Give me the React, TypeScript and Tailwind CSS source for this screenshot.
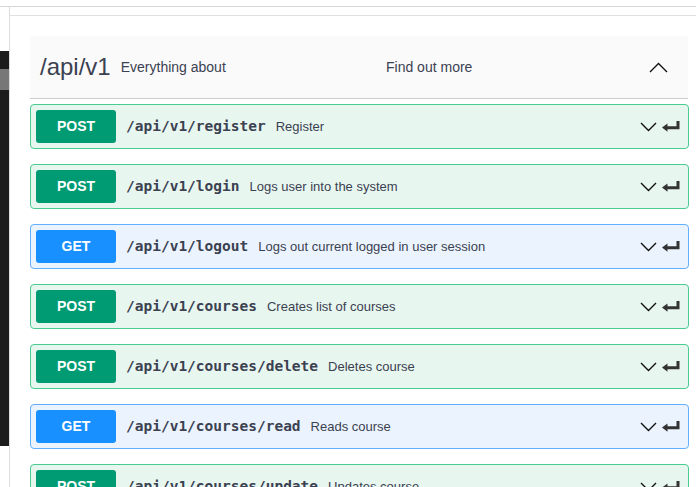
import React from "react";

type Op = { method: "POST" | "GET"; path: string; summary: string };

const OPS: Op[] = [
  { method: "POST", path: "/api/v1/register", summary: "Register" },
  { method: "POST", path: "/api/v1/login", summary: "Logs user into the system" },
  { method: "GET", path: "/api/v1/logout", summary: "Logs out current logged in user session" },
  { method: "POST", path: "/api/v1/courses", summary: "Creates list of courses" },
  { method: "POST", path: "/api/v1/courses/delete", summary: "Deletes course" },
  { method: "GET", path: "/api/v1/courses/read", summary: "Reads course" },
  { method: "POST", path: "/api/v1/courses/update", summary: "Updates course" },
];

const sans = { fontFamily: '"Liberation Sans", Arial, sans-serif' };

function ChevronDown() {
  return (
    <svg width="17" height="10" viewBox="0 0 17 10" fill="none">
      <path d="M1 1 L8.5 8.5 L16 1" stroke="#111" strokeWidth="1.4" />
    </svg>
  );
}

function ReturnArrow() {
  return (
    <svg width="18" height="11" viewBox="0 0 18 11" fill="#333">
      <path d="M14.5 0 H17.5 V8.2 H5.5 V10.8 L0 6.6 L5.5 2.4 V5.2 H14.5 Z" />
    </svg>
  );
}

function OpBlock({ op }: { op: Op }) {
  const post = op.method === "POST";
  return (
    <div
      className={`flex items-center h-[45px] mb-[15px] rounded-[4px] border px-[5px] shrink-0 ${
        post ? "border-[#49cc90] bg-[#e8f6f0]" : "border-[#61affe] bg-[#ebf4fe]"
      }`}
    >
      <div
        className={`w-[80px] h-[33px] rounded-[3px] flex items-center justify-center text-white font-bold text-[14px] ${
          post ? "bg-[#009b73]" : "bg-[#1890ff]"
        }`}
        style={sans}
      >
        {op.method}
      </div>
      <span
        className="ml-[10px] font-bold text-[14.5px] text-[#3b4151] whitespace-nowrap"
        style={{ fontFamily: '"DejaVu Sans Mono", "Liberation Mono", monospace' }}
      >
        {op.path}
      </span>
      <span className="ml-[10px] text-[13px] text-[#3b4151] whitespace-nowrap" style={sans}>
        {op.summary}
      </span>
      <div className="ml-auto flex items-center gap-[5px] mr-[3px]">
        <ChevronDown />
        <ReturnArrow />
      </div>
    </div>
  );
}

export default function App() {
  return (
    <div className="w-[696px] h-[487px] overflow-hidden bg-white flex flex-col">
      <div className="h-[6px] shrink-0" />
      <div className="flex flex-1 border-t border-[#d6d6d6] min-h-0">
        {/* left strip */}
        <div className="w-[10px] shrink-0 border-r border-[#dcdcdc] flex flex-col">
          <div className="h-[44px]" />
          <div className="h-[395px] bg-[#1c1c1c] flex flex-col items-center">
            <div className="h-[18px]" />
            <div className="w-full h-[21px] bg-[#777]" />
          </div>
        </div>
        {/* main */}
        <div className="flex-1 flex flex-col min-w-0">
          <div className="h-[8px] shrink-0" />
          <div className="border-t border-[#e0e0e0] pt-[20px] pl-[20px] pr-[7px] flex flex-col">
            <div className="h-[63px] bg-[#fafafa] border-b border-[#cccccc] mr-[1px] mb-[5px] flex items-center px-[10px] shrink-0 text-[#3b4151]" style={sans}>
              <div className="w-[346px] flex items-center">
                <span className="text-[24px]">/api/v1</span>
                <span className="ml-[10px] text-[14px]">Everything about</span>
              </div>
              <span className="text-[14px]">Find out more</span>
              <svg className="ml-auto mr-[10px]" width="19" height="11" viewBox="0 0 19 11" fill="none">
                <path d="M1 10 L9.5 1.5 L18 10" stroke="#111" strokeWidth="1.4" />
              </svg>
            </div>
            {OPS.map((op) => (
              <OpBlock key={op.path} op={op} />
            ))}
          </div>
        </div>
      </div>
    </div>
  );
}
